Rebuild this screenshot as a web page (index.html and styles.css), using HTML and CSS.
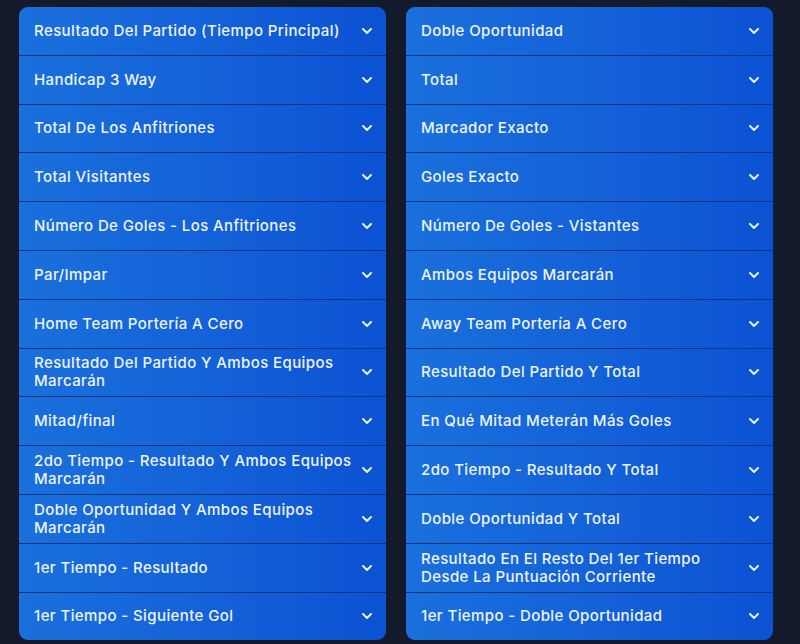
FILE: index.html
```html
<!DOCTYPE html>
<html lang="es">
<head>
  <meta charset="UTF-8" />
  <meta name="viewport" content="width=device-width, initial-scale=1.0"/>
  <title>Mercados</title>
  <link rel="stylesheet" href="styles.css">
</head>
<body>
  <div class="markets">
    <!-- Left column -->
    <div class="market-list">
      <div class="market-row"><span>Resultado Del Partido (Tiempo Principal)</span><svg class="chevron" viewBox="0 0 10 6"><path d="M1 1l4 4 4-4"/></svg></div>
      <div class="market-row"><span>Handicap 3 Way</span><svg class="chevron" viewBox="0 0 10 6"><path d="M1 1l4 4 4-4"/></svg></div>
      <div class="market-row"><span>Total De Los Anfitriones</span><svg class="chevron" viewBox="0 0 10 6"><path d="M1 1l4 4 4-4"/></svg></div>
      <div class="market-row"><span>Total Visitantes</span><svg class="chevron" viewBox="0 0 10 6"><path d="M1 1l4 4 4-4"/></svg></div>
      <div class="market-row"><span>Número De Goles - Los Anfitriones</span><svg class="chevron" viewBox="0 0 10 6"><path d="M1 1l4 4 4-4"/></svg></div>
      <div class="market-row"><span>Par/Impar</span><svg class="chevron" viewBox="0 0 10 6"><path d="M1 1l4 4 4-4"/></svg></div>
      <div class="market-row"><span>Home Team Portería A Cero</span><svg class="chevron" viewBox="0 0 10 6"><path d="M1 1l4 4 4-4"/></svg></div>
      <div class="market-row"><span>Resultado Del Partido Y Ambos Equipos Marcarán</span><svg class="chevron" viewBox="0 0 10 6"><path d="M1 1l4 4 4-4"/></svg></div>
      <div class="market-row"><span>Mitad/final</span><svg class="chevron" viewBox="0 0 10 6"><path d="M1 1l4 4 4-4"/></svg></div>
      <div class="market-row"><span>2do Tiempo - Resultado Y Ambos Equipos Marcarán</span><svg class="chevron" viewBox="0 0 10 6"><path d="M1 1l4 4 4-4"/></svg></div>
      <div class="market-row"><span>Doble Oportunidad Y Ambos Equipos Marcarán</span><svg class="chevron" viewBox="0 0 10 6"><path d="M1 1l4 4 4-4"/></svg></div>
      <div class="market-row"><span>1er Tiempo - Resultado</span><svg class="chevron" viewBox="0 0 10 6"><path d="M1 1l4 4 4-4"/></svg></div>
      <div class="market-row"><span>1er Tiempo - Siguiente Gol</span><svg class="chevron" viewBox="0 0 10 6"><path d="M1 1l4 4 4-4"/></svg></div>
    </div>

    <!-- Right column -->
    <div class="market-list">
      <div class="market-row"><span>Doble Oportunidad</span><svg class="chevron" viewBox="0 0 10 6"><path d="M1 1l4 4 4-4"/></svg></div>
      <div class="market-row"><span>Total</span><svg class="chevron" viewBox="0 0 10 6"><path d="M1 1l4 4 4-4"/></svg></div>
      <div class="market-row"><span>Marcador Exacto</span><svg class="chevron" viewBox="0 0 10 6"><path d="M1 1l4 4 4-4"/></svg></div>
      <div class="market-row"><span>Goles Exacto</span><svg class="chevron" viewBox="0 0 10 6"><path d="M1 1l4 4 4-4"/></svg></div>
      <div class="market-row"><span>Número De Goles - Vistantes</span><svg class="chevron" viewBox="0 0 10 6"><path d="M1 1l4 4 4-4"/></svg></div>
      <div class="market-row"><span>Ambos Equipos Marcarán</span><svg class="chevron" viewBox="0 0 10 6"><path d="M1 1l4 4 4-4"/></svg></div>
      <div class="market-row"><span>Away Team Portería A Cero</span><svg class="chevron" viewBox="0 0 10 6"><path d="M1 1l4 4 4-4"/></svg></div>
      <div class="market-row"><span>Resultado Del Partido Y Total</span><svg class="chevron" viewBox="0 0 10 6"><path d="M1 1l4 4 4-4"/></svg></div>
      <div class="market-row"><span>En Qué Mitad Meterán Más Goles</span><svg class="chevron" viewBox="0 0 10 6"><path d="M1 1l4 4 4-4"/></svg></div>
      <div class="market-row"><span>2do Tiempo - Resultado Y Total</span><svg class="chevron" viewBox="0 0 10 6"><path d="M1 1l4 4 4-4"/></svg></div>
      <div class="market-row"><span>Doble Oportunidad Y Total</span><svg class="chevron" viewBox="0 0 10 6"><path d="M1 1l4 4 4-4"/></svg></div>
      <div class="market-row"><span>Resultado En El Resto Del 1er Tiempo Desde La Puntuación Corriente</span><svg class="chevron" viewBox="0 0 10 6"><path d="M1 1l4 4 4-4"/></svg></div>
      <div class="market-row"><span>1er Tiempo - Doble Oportunidad</span><svg class="chevron" viewBox="0 0 10 6"><path d="M1 1l4 4 4-4"/></svg></div>
    </div>
  </div>
</body>
</html>
```

FILE: styles.css
```css
body {
  margin: 0;
  background-color: #131a2c;
  font-family: Inter, "Liberation Sans", Arial, sans-serif;
}

.markets {
  display: grid;
  grid-template-columns: 367px 367px;
  column-gap: 20px;
  padding: 7px 28px 0 19px;
}

.market-list {
  border-radius: 9px;
  overflow: hidden;
  background-color: #0a3480;
}

.market-row {
  display: flex;
  align-items: center;
  justify-content: space-between;
  height: 47.8px;
  padding: 0 14px 0 15px;
  margin-top: 1px;
  background: linear-gradient(90deg, #1a70dc 0%, #1462d8 50%, #0c52d4 100%);
  color: #eef4ff;
  font-size: 15px;
  font-weight: 500;
  letter-spacing: 0.4px;
  line-height: 18px;
}

.market-row:first-child {
  margin-top: 0;
}

.market-row span {
  max-width: 322px;
}

.chevron {
  width: 10px;
  height: 6px;
  flex-shrink: 0;
  fill: none;
  stroke: #e6efff;
  stroke-width: 2;
  stroke-linecap: round;
  stroke-linejoin: round;
}
```
